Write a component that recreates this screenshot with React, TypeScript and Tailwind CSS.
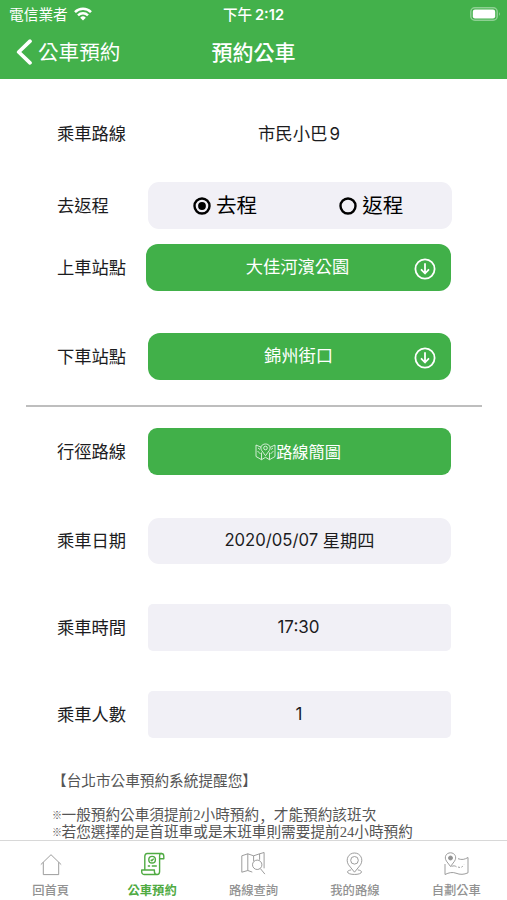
import type { ReactNode } from 'react';

const LATIN_CJK = "font-['Inter','Noto_Sans_CJK_TC',sans-serif]";

function FormRow({ label, className, children }: { label: string; className: string; children: ReactNode }) {
  return (
    <div className={`flex h-[47px] shrink-0 items-center ${className}`}>
      <div className="ml-[57px] w-[91px] shrink-0 text-[17.3px] leading-6 whitespace-nowrap">{label}</div>
      {children}
    </div>
  );
}

function DownCircle() {
  return (
    <svg viewBox="0 0 22 22" className="h-[22px] w-[22px]" fill="none" stroke="white" strokeWidth="1.8" strokeLinecap="round" strokeLinejoin="round">
      <circle cx="11" cy="11" r="9.6" />
      <path d="M11 6v9.200M7.500 11.800l3.500 3.700 3.500-3.700" />
    </svg>
  );
}

function StationButton({ name, className }: { name: string; className: string }) {
  return (
    <button className={`grid h-[47px] grid-cols-[1fr_auto_1fr] items-center rounded-[12px] bg-[#41b049] text-[17.3px] text-white ${className}`}>
      <span />
      <span className="-mt-px mr-[2px] leading-6">{name}</span>
      <span className="mt-[2px] mr-[15.500px] justify-self-end"><DownCircle /></span>
    </button>
  );
}

function Radio({ label, checked }: { label: string; checked?: boolean }) {
  return (
    <div className="flex items-center gap-[5px]">
      <svg viewBox="0 0 18 18" className="h-[18px] w-[18px]">
        <circle cx="9" cy="9" r="7.5" fill="none" stroke="black" strokeWidth="2.4" />
        {checked && <circle cx="9" cy="9" r="3.9" fill="black" />}
      </svg>
      <span className="text-[20.6px] leading-7">{label}</span>
    </div>
  );
}

function RouteMapIcon() {
  return (
    <svg viewBox="0 0 21 18" className="h-[18px] w-[21px]" fill="none" stroke="white" strokeOpacity="0.85" strokeWidth="0.9" strokeLinejoin="round">
      <path d="M6 4.2 1 2v11.500l5.500 3.200 4-2.400 4 2.400 5.500-3.200V2l-4.500 2.200M6.500 9.500v7M14.500 9.500v7" />
      <path d="M10.500 12.700 6.700 7.500C4.500 4 7 1 10.500 1s6 3 3.800 6.500z" />
      <circle cx="10.500" cy="5" r="1.800" />
      <path d="m2.500 8 3 3M18.500 8l-3 3M3 5l2 1.500M18 5l-2 1.500" />
    </svg>
  );
}

function HomeIcon() {
  return <path d="M2.800 12.600 13 2.700l10.200 9.900M5.300 10.300v12.300h15.400V10.300" />;
}

function BookingIcon() {
  return (
    <g transform="translate(0.800 0)">
      <path d="M4 18V4.500C4 2.300 5 1.500 6.500 1.500h14c1.600 0 2.500 1 2.500 2.700v2.600h-4.200V4c0-1.500.6-2.500 1.800-2.500" />
      <path d="M18.800 6.800v12.700c0 1.800-.8 3-2.400 3H3.200C1.800 22.500.9 21.300.9 19.500V18h12.700v1.500c0 2 .8 3 2.500 3" />
      <circle cx="11.300" cy="7.700" r="3.300" />
      <path d="m9.900 7.700 1.100 1.100 1.900-2.200M7 14h2.300M11 14h5" />
    </g>
  );
}

function SearchMapIcon() {
  return (
    <>
      <path d="m.8 3.800 6-2 5.800 2 6-2 4.500-1.300v15.800M.8 3.800v16.400l6-1.700 4.500 1.600M6.800 1.800v16.700M12.600 3.800v5.500M18.600 1.800v6" />
      <circle cx="16.200" cy="12.800" r="4.700" />
      <path d="m19.300 16.500 4.600 5.600" />
    </>
  );
}

function PinIcon() {
  return (
    <g transform="translate(0.500 0)">
      <path d="M12 20.200 6 12.800C2.700 7.400 6 1 12 1s9.300 6.400 6 11.800z" />
      <circle cx="12" cy="8.300" r="3.800" />
      <path d="M8.700 17.900c-2.400.4-3.700 1.100-3.700 2 0 3.400 14 3.400 14 0 0-.9-1.300-1.600-3.700-2" />
    </g>
  );
}

function PlanIcon() {
  return (
    <>
      <path d="m6.500 14.500-4-5.300C-.3 5 2.300.8 6.500.8s6.800 4.200 4 8.400z" />
      <circle cx="6.500" cy="6" r="2" fill="currentColor" />
      <path d="M1 12v10.500c4-2 7.500-2.600 11-1.300 4 1.600 8 1.500 12-.4V5.500c-3.500 2-6 2.600-10 1.200M7.500 14.500c2-1 3.500-.8 5 .3" />
      <path d="M14 15c3 1.200 4.700-.2 6-2.500" strokeDasharray="2 1.500" />
    </>
  );
}

const tabs: { label: string; icon: ReactNode; active?: boolean }[] = [
  { label: '回首頁', icon: <HomeIcon /> },
  { label: '公車預約', icon: <BookingIcon />, active: true },
  { label: '路線查詢', icon: <SearchMapIcon /> },
  { label: '我的路線', icon: <PinIcon /> },
  { label: '自劃公車', icon: <PlanIcon /> },
];

export default function App() {
  return (
    <div lang="zh-Hant" className={`flex h-[900px] w-[507px] flex-col overflow-hidden bg-white text-[#1c1c1e] ${LATIN_CJK}`}>
      <header className="h-[79px] shrink-0 bg-[#43b14b] text-white">
        <div className="grid h-7 grid-cols-3 items-center">
          <div className="flex items-center gap-[6px] pl-[9px] text-[14.7px] leading-5">
            <span className="mt-px">電信業者</span>
            <svg viewBox="0 0 18 14" className="-mt-px h-[14px] w-[18px]" fill="none" stroke="white" strokeWidth="2.500">
              <path d="M1 5.100a11.400 11.400 0 0 1 16 0M4 8.300a7.200 7.200 0 0 1 10 0" />
              <path d="M9 13.500 6.200 10.700a4 4 0 0 1 5.600 0z" fill="white" stroke="none" />
            </svg>
          </div>
          <div className="mt-px text-center text-[14.600px] leading-5 font-medium whitespace-nowrap">下午 <span className="-ml-[1px] font-semibold">2:12</span></div>
          <svg viewBox="0 0 31 14" className="mr-[6px] -mt-[1px] h-[14px] w-[31px] justify-self-end">
            <rect x="0.800" y="0.800" width="26.400" height="12.400" rx="4" fill="none" stroke="white" strokeOpacity="0.400" strokeWidth="1.500" />
            <rect x="2.800" y="2.500" width="22.400" height="9" rx="2.200" fill="white" />
            <path d="M29 5q1.700 2 0 4z" fill="white" fillOpacity="0.500" />
          </svg>
        </div>
        <div className="grid h-[48px] grid-cols-[1fr_auto_1fr] items-center">
          <div className="flex items-center gap-[5px] pl-[16px] text-[20.600px] leading-7">
            <svg viewBox="0 0 17 26" className="h-[26px] w-[17px]" fill="none" stroke="white" strokeWidth="3.700" strokeLinecap="round" strokeLinejoin="round">
              <path d="M14 2.200 2.700 13 14 23.800" />
            </svg>
            <span className="mt-[2px]">公車預約</span>
          </div>
          <h1 className="mt-[2px] text-[21px] leading-7 font-medium">預約公車</h1>
          <span />
        </div>
      </header>

      <main className="flex min-h-0 flex-1 flex-col overflow-hidden">
        <FormRow label="乘車路線" className="mt-[31px]">
          <div className="w-[302px] text-center text-[17.400px] leading-6">市民小巴<span className="ml-[2px] text-[17px]">9</span></div>
        </FormRow>
        <FormRow label="去返程" className="mt-[25px]">
          <div className="flex h-[47px] w-[304px] items-center gap-[82px] rounded-[11px] bg-[#f1f0f6] pl-[45px] text-black">
            <Radio label="去程" checked />
            <Radio label="返程" />
          </div>
        </FormRow>
        <FormRow label="上車站點" className="mt-[15px]">
          <StationButton name="大佳河濱公園" className="-ml-[2px] w-[305px]" />
        </FormRow>
        <FormRow label="下車站點" className="mt-[42px]">
          <StationButton name="錦州街口" className="w-[303px]" />
        </FormRow>
        <hr className="mt-[25px] ml-[26px] h-[2px] w-[456px] shrink-0 border-0 bg-[#bebebe]" />
        <FormRow label="行徑路線" className="mt-[21px]">
          <button className="flex h-[47px] w-[303px] items-center justify-center rounded-[9px] bg-[#41b049] pt-px pr-[3px] text-[16.200px] text-white">
            <RouteMapIcon />
            <span className="leading-6">路線簡圖</span>
          </button>
        </FormRow>
        <FormRow label="乘車日期" className="mt-[42px]">
          <div className="flex h-[46px] w-[303px] items-center justify-center rounded-[11px] bg-[#f1f0f6] text-[17.250px] whitespace-pre"><span className="text-[16.700px]">2020/05/07 </span>星期四</div>
        </FormRow>
        <FormRow label="乘車時間" className="mt-[40px]">
          <div className="flex h-[47px] w-[303px] items-center justify-center rounded-[5px] bg-[#f1f0f6] pr-[2px] text-[17px]">17:30</div>
        </FormRow>
        <FormRow label="乘車人數" className="mt-[40px]">
          <div className="flex h-[47px] w-[303px] items-center justify-center rounded-[5px] bg-[#f1f0f6] pr-px text-[17px]">1</div>
        </FormRow>
        <div className="mt-[35px] pl-[52px] font-['Liberation_Serif','Noto_Sans_CJK_TC',serif] text-[14.650px] leading-[17px] whitespace-nowrap text-[#555]">
          <p>【台北市公車預約系統提醒您】</p>
          <p className="mt-[17px] flex"><span className="w-[9.500px] text-[10px]">※</span>一般預約公車須提前2小時預約<span lang="zh-Hans" className="font-['Noto_Sans_CJK_SC',sans-serif]">，</span>才能預約該班次</p>
          <p className="flex"><span className="w-[9.500px] text-[10px]">※</span>若您選擇的是首班車或是末班車則需要提前24小時預約</p>
        </div>
      </main>

      <nav className="grid h-[60px] shrink-0 grid-cols-5 border-t border-[#d8d8d8] bg-white">
        {tabs.map((tab) => (
          <div key={tab.label} className={`flex flex-col items-center pt-[11px] ${tab.active ? 'text-[#4faa42]' : 'text-[#929292]'}`}>
            <svg viewBox="0 0 25 24" className="h-6 w-[25px]" fill="none" stroke="currentColor" strokeWidth={tab.active ? 1.400 : 0.900} strokeLinejoin="round">
              {tab.icon}
            </svg>
            <span className={`mt-[7px] text-[12.300px] leading-4 ${tab.active ? 'font-bold' : 'font-medium'}`}>{tab.label}</span>
          </div>
        ))}
      </nav>
    </div>
  );
}
